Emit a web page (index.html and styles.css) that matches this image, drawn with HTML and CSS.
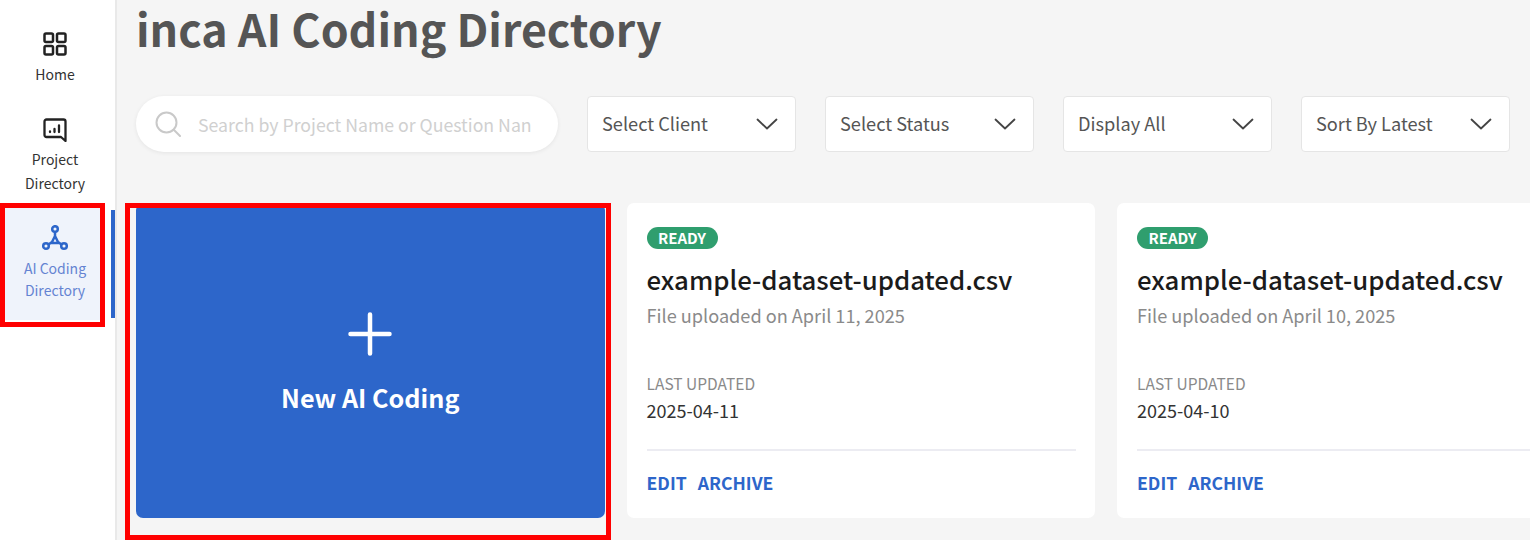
FILE: index.html
```html
<!DOCTYPE html>
<html lang="en">
<head>
<meta charset="utf-8">
<title>inca AI Coding Directory</title>
<link rel="stylesheet" href="styles.css">
</head>
<body>
<div class="app">
  <nav class="sidebar">
    <a class="nav-item">
      <svg class="nav-icon" viewBox="0 0 24 24" fill="none" stroke="#222" stroke-width="2.500" stroke-linejoin="round"><rect x="1.500" y="1.500" width="8.500" height="8.500" rx="1.500"/><rect x="14" y="1.500" width="8.500" height="8.500" rx="1.500"/><rect x="1.500" y="14" width="8.500" height="8.500" rx="1.500"/><rect x="14" y="14" width="8.500" height="8.500" rx="1.500"/></svg>
      <span>Home</span>
    </a>
    <a class="nav-item nav-project">
      <svg class="nav-icon" viewBox="0 0 24 24" fill="none" stroke="#222" stroke-width="2.300" stroke-linecap="round" stroke-linejoin="round"><path d="M3.500 1.500h17a2 2 0 0 1 2 2V23l-4.500-4H3.500a2 2 0 0 1-2-2v-13.500a2 2 0 0 1 2-2z"/><path d="M7 14v-.5M11.500 14v-3M16 14V7.500"/></svg>
      <span>Project<br>Directory</span>
    </a>
    <a class="nav-item nav-active">
      <svg class="nav-icon" viewBox="0 0 26 26" fill="none" stroke="#2d66ca" stroke-width="2.500"><circle cx="13" cy="4" r="2.800"/><circle cx="4" cy="21" r="2.800"/><circle cx="22" cy="21" r="2.800"/><path d="M13 7v5M6.500 19.500l3.500-2.500M19.500 19.500L16 17M13 11l-3.500 7h7z" stroke-linejoin="round"/></svg>
      <span>AI Coding<br>Directory</span>
    </a>
  </nav>
  <main class="content">
    <h1 class="title">inca AI Coding Directory</h1>
    <div class="toolbar">
      <div class="search">
        <svg class="search-icon" viewBox="0 0 26 26" fill="none" stroke="#c9c9c9" stroke-width="2" stroke-linecap="round"><circle cx="11.500" cy="11.500" r="10"/><path d="M19 19l6 6"/></svg>
        <span class="search-text">Search by Project Name or Question Nan</span>
      </div>
      <div class="select"><span>Select Client</span><svg class="chev" viewBox="0 0 22 12" fill="none" stroke="#444" stroke-width="1.800" stroke-linecap="round" stroke-linejoin="round"><path d="M1.500 1.500L11 10.500l9.500-9"/></svg></div>
      <div class="select"><span>Select Status</span><svg class="chev" viewBox="0 0 22 12" fill="none" stroke="#444" stroke-width="1.800" stroke-linecap="round" stroke-linejoin="round"><path d="M1.500 1.500L11 10.500l9.500-9"/></svg></div>
      <div class="select"><span>Display All</span><svg class="chev" viewBox="0 0 22 12" fill="none" stroke="#444" stroke-width="1.800" stroke-linecap="round" stroke-linejoin="round"><path d="M1.500 1.500L11 10.500l9.500-9"/></svg></div>
      <div class="select"><span>Sort By Latest</span><svg class="chev" viewBox="0 0 22 12" fill="none" stroke="#444" stroke-width="1.800" stroke-linecap="round" stroke-linejoin="round"><path d="M1.500 1.500L11 10.500l9.500-9"/></svg></div>
    </div>
    <div class="cards">
      <div class="card new-card">
        <svg class="plus" viewBox="0 0 44 44" fill="none" stroke="#fff" stroke-width="4.500" stroke-linecap="round"><path d="M22 2.500v39M2.500 22h39"/></svg>
        <span class="new-label">New AI Coding</span>
      </div>
      <article class="card file-card">
        <span class="badge">READY</span>
        <h2 class="file-name">example-dataset-updated.csv</h2>
        <p class="file-sub">File uploaded on April 11, 2025</p>
        <p class="meta-label">LAST UPDATED</p>
        <p class="meta-value">2025-04-11</p>
        <div class="actions"><a>EDIT</a><a>ARCHIVE</a></div>
      </article>
      <article class="card file-card">
        <span class="badge">READY</span>
        <h2 class="file-name">example-dataset-updated.csv</h2>
        <p class="file-sub">File uploaded on April 10, 2025</p>
        <p class="meta-label">LAST UPDATED</p>
        <p class="meta-value">2025-04-10</p>
        <div class="actions"><a>EDIT</a><a>ARCHIVE</a></div>
      </article>
    </div>
  </main>
</div>
<div class="mark mark-nav"></div>
<div class="mark mark-new"></div>
</body>
</html>
```
FILE: styles.css
```css
* { box-sizing: border-box; }
html, body { margin: 0; height: 540px; overflow: hidden; }
body { font-family: "Noto Sans CJK SC", "Noto Sans CJK JP", "Open Sans", sans-serif; background: #f5f5f5; position: relative; }
.app { display: flex; width: 1530px; height: 540px; overflow: hidden; }
.sidebar { flex: none; width: 117px; height: 540px; background: #fff; border-right: 2px solid #e9e9e9; padding: 32px 0 0 5px; display: flex; flex-direction: column; }
.nav-item { width: 100px; display: flex; flex-direction: column; align-items: center; text-align: center; font-size: 14px; line-height: 23px; color: #333; }
.nav-icon { width: 24px; height: 24px; display: block; }
.nav-item span { display: block; margin-top: 7px; }
.nav-project { margin-top: 32px; }
.nav-project span { margin-top: 5px; line-height: 24px; }
.nav-active { margin-top: 13px; height: 112px; background: #eff3fb; color: #6483d2; padding-top: 17px; position: relative; line-height: 22px; }
.nav-active span { margin-top: 6px; line-height: 22px; }
.nav-active::after { content: ""; position: absolute; left: 106px; top: 2px; width: 4px; height: 108px; background: #2d66ca; }
.nav-active .nav-icon { width: 26px; height: 26px; }
.content { flex: 1; min-width: 0; padding: 0 0 0 19px; }
.title { margin: 0; height: 96px; font-size: 44.700px; line-height: 56px; font-weight: 600; color: #555; white-space: nowrap; }
.toolbar { display: flex; align-items: flex-start; height: 107px; }
.search { width: 422px; height: 56px; border-radius: 28px; background: #fff; box-shadow: 0 1px 4px rgba(0,0,0,.07); display: flex; align-items: center; padding-left: 19px; flex: none; margin-right: 29px; }
.search-icon { width: 26px; height: 26px; flex: none; }
.search-text { margin-left: 17px; font-size: 17.700px; line-height: 26px; color: #d0d0d0; white-space: nowrap; overflow: hidden; width: 333px; }
.select { flex: none; width: 209px; height: 56px; background: #fff; border: 1px solid #e5e5e5; border-radius: 4px; display: flex; align-items: center; justify-content: space-between; padding: 0 17px 0 14px; font-size: 18.200px; line-height: 26px; color: #555; margin-right: 29px; }
.select span { position: relative; top: -1px; }
.chev { width: 22px; height: 12px; flex: none; }
.cards { display: flex; gap: 22px; }
.card { flex: none; width: 468.500px; height: 315px; border-radius: 7px; background: #fff; }
.new-card { background: #2d66ca; color: #fff; display: flex; flex-direction: column; align-items: center; padding-top: 109px; }
.plus { width: 44px; height: 44px; display: block; }
.new-label { margin-top: 23px; font-size: 25.200px; line-height: 36px; font-weight: 600; }
.file-card { padding: 24px 20px 0; }
.badge { display: block; width: 71px; height: 22px; border-radius: 11px; background: #2f9e6e; color: #fff; font-size: 15px; line-height: 22px; font-weight: 600; text-align: center; }
.file-name { margin: 13px 0 0; font-size: 25.800px; line-height: 34px; font-weight: 500; color: #1b1b1b; white-space: nowrap; }
.file-sub { margin: 6px 0 0; font-size: 18.150px; line-height: 26px; color: #8a8a8a; white-space: nowrap; }
.meta-label { margin: 45px 0 0; font-size: 15.500px; line-height: 20px; color: #8a8a8a; }
.meta-value { margin: 4px 0 0; font-size: 18px; line-height: 26px; color: #333; }
.actions { margin-top: 26px; width: 429px; border-top: 2px solid #ececf2; padding-top: 19px; display: flex; gap: 11px; font-size: 17.600px; line-height: 26px; font-weight: 700; color: #2d66ca; }
.mark { position: absolute; border: 5px solid #f00; pointer-events: none; }
.mark-nav { left: 0; top: 203px; width: 105px; height: 124px; }
.mark-new { left: 125px; top: 203px; width: 486px; height: 337px; }
```
